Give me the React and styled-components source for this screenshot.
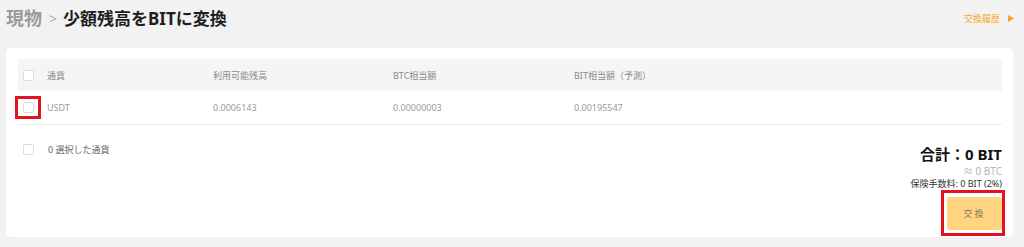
import React from 'react';
import styled, { createGlobalStyle } from 'styled-components';

const Global = createGlobalStyle`
  html, body {
    margin: 0;
    padding: 0;
    background: #f2f2f2;
    font-family: "Noto Sans", "Noto Sans CJK JP", sans-serif;
  }
`;

const Page = styled.div`
  width: 1024px;
  height: 247px;
  box-sizing: border-box;
  padding: 0 8px 0 6px;
  display: flex;
  flex-direction: column;
`;

const Top = styled.div`
  height: 40px;
  display: flex;
  align-items: center;
  justify-content: space-between;
  padding-right: 2px;
  margin-top: -3px;
`;

const Crumbs = styled.div`
  display: flex;
  align-items: center;
  font-size: 17px;
  font-weight: 700;
  .parent {
    color: #9a9a9a;
    font-size: 18px;
  }
  .sep {
    color: #b0b0b0;
    font-size: 14px;
    font-weight: 400;
    margin: 2px 6px 0 7px;
  }
  .current {
    color: #1f1f1f;
  }
`;

const History = styled.a`
  display: flex;
  align-items: center;
  gap: 8px;
  color: #f5a623;
  font-size: 9px;
  margin-top: 2px;
  svg {
    width: 6px;
    height: 7px;
  }
`;

const Card = styled.div`
  background: #fff;
  border-radius: 5px;
  height: 189px;
  width: 1007px;
  box-sizing: border-box;
  padding: 11px 11px 0 12px;
  margin-top: 11px;
  position: relative;
`;

const Row = styled.div`
  display: grid;
  grid-template-columns: 24px 166px 180px 181px 1fr;
  align-items: center;
  height: ${p => p.$h}px;
  background: ${p => (p.$head ? '#f5f5f5' : 'transparent')};
  border-bottom: ${p => (p.$line ? '1px solid #ececec' : 'none')};
  font-size: 9px;
  color: ${p => (p.$head ? '#8a8a8a' : '#9a9a9a')};
  padding-left: 5px;
`;

const Check = styled.span`
  display: block;
  width: 9px;
  height: 9px;
  border: 1px solid #dcdcdc;
  border-radius: 2px;
  background: #fff;
`;

const Footer = styled.div`
  display: flex;
  justify-content: space-between;
  padding-left: 5px;
`;

const Selected = styled.div`
  display: flex;
  align-items: center;
  font-size: 9px;
  color: #666;
  margin-top: 19px;
  height: 10px;
  span + span {
    margin-left: 14px;
  }
`;

const Summary = styled.div`
  display: flex;
  flex-direction: column;
  align-items: flex-end;
  margin-top: 19px;
`;

const Total = styled.div`
  font-size: 15px;
  font-weight: 700;
  color: #111;
  line-height: 20px;
`;

const Approx = styled.div`
  font-size: 10px;
  color: #b5b5b5;
  line-height: 12px;
  margin-top: 1px;
`;

const Fee = styled.div`
  font-size: 9px;
  color: #333;
  line-height: 12px;
  margin-top: 1px;
`;

const Button = styled.button`
  margin-top: 7px;
  width: 55px;
  height: 33px;
  border: none;
  border-radius: 3px;
  background: #ffd582;
  color: #8a7a5a;
  font-size: 9px;
  letter-spacing: 2px;
  font-family: inherit;
  position: relative;
`;

const Mark = styled.span`
  position: absolute;
  border: 3px solid #e3121e;
  box-sizing: border-box;
  pointer-events: none;
`;

const rows = [
  { name: 'USDT', avail: '0.0006143', btc: '0.00000003', bit: '0.00195547' },
];

export default function App() {
  return (
    <>
      <Global />
      <Page>
        <Top>
          <Crumbs>
            <span className="parent">現物</span>
            <span className="sep">&gt;</span>
            <span className="current">少額残高をBITに変換</span>
          </Crumbs>
          <History>
            交換履歴
            <svg viewBox="0 0 6 7"><path d="M0 0 L6 3.5 L0 7 Z" fill="#f5a623" /></svg>
          </History>
        </Top>
        <Card>
          <Row $head $h={32}>
            <Check />
            <span>通貨</span>
            <span>利用可能残高</span>
            <span>BTC相当額</span>
            <span>BIT相当額（予測）</span>
          </Row>
          {rows.map((r, i) => (
            <Row key={i} $line $h={33}>
              <Check />
              <span>{r.name}</span>
              <span>{r.avail}</span>
              <span>{r.btc}</span>
              <span>{r.bit}</span>
            </Row>
          ))}
          <Mark style={{ left: 9, top: 48, width: 26, height: 23 }} />
          <Footer>
            <Selected>
              <Check />
              <span>0 選択した通貨</span>
            </Selected>
            <Summary>
              <Total>合計：0 BIT</Total>
              <Approx>≈ 0 BTC</Approx>
              <Fee>保険手数料: 0 BIT (2%)</Fee>
              <Button>
                交換
                <Mark style={{ left: -6, top: -7, width: 64, height: 46 }} />
              </Button>
            </Summary>
          </Footer>
        </Card>
      </Page>
    </>
  );
}
